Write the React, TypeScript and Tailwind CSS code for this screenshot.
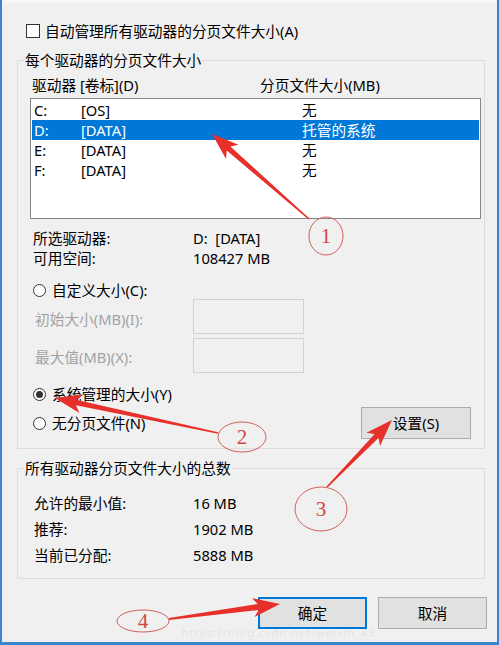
import React from 'react';

type Pt = [number, number];

// tapered arrow shape, tail -> tip
function arrowPoints(x1: number, y1: number, x2: number, y2: number, w0 = 1.5, w1 = 5.5, hl = 22, hw = 9.5) {
  const dx = x2 - x1;
  const dy = y2 - y1;
  const len = Math.hypot(dx, dy);
  const ux = dx / len;
  const uy = dy / len;
  const nx = -uy;
  const ny = ux;
  const bx = x2 - ux * hl;
  const by = y2 - uy * hl;
  const back = 5;
  const pts: Pt[] = [
    [x1 + (nx * w0) / 2, y1 + (ny * w0) / 2],
    [bx + (nx * w1) / 2, by + (ny * w1) / 2],
    [bx - ux * back + nx * hw, by - uy * back + ny * hw],
    [x2, y2],
    [bx - ux * back - nx * hw, by - uy * back - ny * hw],
    [bx - (nx * w1) / 2, by - (ny * w1) / 2],
    [x1 - (nx * w0) / 2, y1 - (ny * w0) / 2],
  ];
  return pts.map((p) => p.join(',')).join(' ');
}

const Radio = ({ checked, label }: { checked?: boolean; label: string }) => (
  <div className="flex items-center h-[20px] pl-[3px]">
    <span className="shrink-0 w-[13px] h-[13px] rounded-full border border-[#333] bg-white flex items-center justify-center">
      {checked && <span className="w-[7px] h-[7px] rounded-full bg-[#333]" />}
    </span>
    <span className="ml-[6px]">{label}</span>
  </div>
);

const drives = [
  { d: 'C:', label: '[OS]', size: '无' },
  { d: 'D:', label: '[DATA]', size: '托管的系统', selected: true },
  { d: 'E:', label: '[DATA]', size: '无' },
  { d: 'F:', label: '[DATA]', size: '无' },
];

const Annotations = () => (
  <svg className="absolute inset-0 pointer-events-none" width="499" height="645" viewBox="0 0 499 645">
    <g fill="#e8302a">
      <polygon points={arrowPoints(307, 219, 210, 134)} />
      <polygon points={arrowPoints(216, 433, 53, 398)} />
      <polygon points={arrowPoints(325, 487, 390, 420)} />
      <polygon points={arrowPoints(167, 619, 278, 604, 2, 6)} />
    </g>
    <g fill="none" stroke="#d2605a" strokeWidth="1">
      <ellipse cx="324" cy="236" rx="17" ry="19" />
      <ellipse cx="240" cy="437" rx="24" ry="15" />
      <ellipse cx="319" cy="509" rx="26" ry="22" />
      <ellipse cx="141" cy="621" rx="26" ry="11" />
    </g>
    <g fill="#d2463f" fontFamily="'Liberation Serif', serif" fontSize="21" textAnchor="middle">
      <text x="324" y="243">1</text>
      <text x="240" y="444">2</text>
      <text x="319" y="516">3</text>
      <text x="141" y="628">4</text>
    </g>
  </svg>
);

export default function App() {
  return (
    <div className="relative w-[499px] h-[645px] overflow-hidden bg-[#f0f0f0] border-l-2 border-r-2 border-b-[3px] border-[#3a85cc] text-[14.7px] leading-[20px] text-black font-['Noto_Sans','Noto_Sans_CJK_SC',sans-serif]">
      <div className="h-[3px] bg-[#f7f7f7]" />
      <div className="pt-[20px]">
        <div className="flex items-center h-[16px] ml-[24px]">
          <span className="shrink-0 w-[14px] h-[14px] border border-[#333] bg-white" />
          <span className="ml-[5px]">自动管理所有驱动器的分页文件大小(A)</span>
        </div>

        <fieldset className="mt-[11px] ml-[15px] w-[468px] border border-[#dcdcdc] pl-[12px] pr-[3px] pb-[9px]">
          <legend className="-ml-[6px] px-[1px]">每个驱动器的分页文件大小</legend>
          <div className="flex mt-[5px] h-[20px] pl-[2px]">
            <span className="w-[228px]">驱动器 [卷标](D)</span>
            <span>分页文件大小(MB)</span>
          </div>
          <div className="mt-[3px] h-[121px] border border-[#828790] bg-white p-[1px]">
            {drives.map((r) => (
              <div
                key={r.d}
                className={`flex h-[20px] items-center pl-[2px] ${r.selected ? 'bg-[#0078d7] text-white' : ''}`}
              >
                <span className="w-[47px]">{r.d}</span>
                <span className="w-[221px]">{r.label}</span>
                <span>{r.size}</span>
              </div>
            ))}
          </div>

          <div className="mt-[9px] pl-[3px]">
            <div className="flex h-[20px]">
              <span className="w-[160px]">所选驱动器:</span>
              <span>D:&nbsp;&nbsp;[DATA]</span>
            </div>
            <div className="flex h-[20px]">
              <span className="w-[160px]">可用空间:</span>
              <span>108427 MB</span>
            </div>
          </div>

          <div className="mt-[13px] h-[18px] flex items-center">
            <Radio label="自定义大小(C):" />
          </div>
          <div className="flex items-center h-[35px] text-[#a3a3a3]">
            <span className="w-[163px] pl-[5px] pt-[4px]">初始大小(MB)(I):</span>
            <div className="w-[111px] h-full border border-[#d2d2d2] bg-[#f0f0f0]" />
          </div>
          <div className="flex items-center h-[35px] mt-[4px] text-[#a3a3a3]">
            <span className="w-[163px] pl-[5px] pt-[2px]">最大值(MB)(X):</span>
            <div className="w-[111px] h-full border border-[#d2d2d2] bg-[#f0f0f0]" />
          </div>

          <div className="mt-[11px]">
            <Radio checked label="系统管理的大小(Y)" />
          </div>
          <div className="flex items-center justify-between h-[32px] mt-[3px]">
            <Radio label="无分页文件(N)" />
            <button className="mr-[10px] w-[110px] h-[32px] border border-[#adadad] bg-[#e1e1e1]">设置(S)</button>
          </div>
        </fieldset>

        <fieldset className="mt-[9px] ml-[15px] w-[468px] border border-[#dcdcdc] pl-[12px] pr-[3px] pb-[10px]">
          <legend className="-ml-[6px] px-[1px]">所有驱动器分页文件大小的总数</legend>
          <div className="mt-[12px] pl-[4px]">
            {[
              ['允许的最小值:', '16 MB'],
              ['推荐:', '1902 MB'],
              ['当前已分配:', '5888 MB'],
            ].map(([k, v]) => (
              <div key={k} className="flex items-center h-[26px]">
                <span className="w-[159px]">{k}</span>
                <span>{v}</span>
              </div>
            ))}
          </div>
        </fieldset>

        <div className="flex justify-end gap-[11px] mt-[18px] mr-[10px]">
          <button className="w-[109px] h-[32px] border-2 border-[#0078d7] bg-[#e1e1e1]">确定</button>
          <button className="w-[109px] h-[32px] border border-[#adadad] bg-[#e1e1e1]">取消</button>
        </div>
      </div>

      <span className="absolute left-[180px] top-[627px] text-[11px] leading-[12px] text-black opacity-[0.05] tracking-[1px]">
        https://blog.csdn.net/weixin_43
      </span>
      <Annotations />
    </div>
  );
}
